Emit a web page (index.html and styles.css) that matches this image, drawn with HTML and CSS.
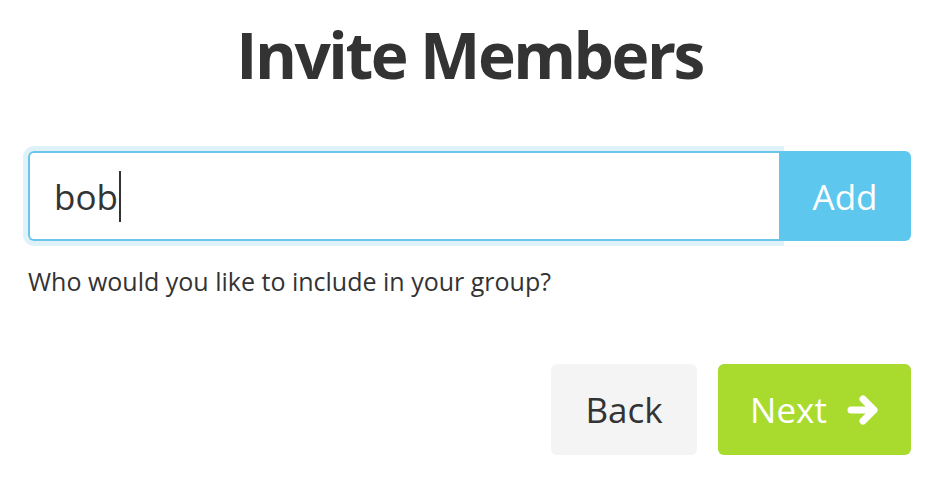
FILE: index.html
```html
<!DOCTYPE html>
<html lang="en">
<head>
<meta charset="utf-8">
<title>Invite Members</title>
<link rel="stylesheet" href="styles.css">
</head>
<body>
<main class="page">
  <h1 class="title">Invite Members</h1>
  <div class="invite-row">
    <div class="field"><span class="field-text">bob</span><span class="caret"></span></div>
    <button class="btn btn-add" type="button">Add</button>
  </div>
  <p class="hint">Who would you like to include in your group?</p>
  <div class="actions">
    <button class="btn btn-back" type="button">Back</button>
    <button class="btn btn-next" type="button">Next
      <svg class="arrow" viewBox="0 0 32 32" width="32" height="32" aria-hidden="true">
        <path d="M4 16 H27 M16 5 L27 16 L16 27" fill="none" stroke="#fff" stroke-width="7" stroke-linecap="round" stroke-linejoin="round"/>
      </svg>
    </button>
  </div>
</main>
</body>
</html>
```
FILE: styles.css
```css
* { box-sizing: border-box; }
html, body {
  margin: 0;
  padding: 0;
  background: #ffffff;
}
body {
  font-family: "Open Sans", "Liberation Sans", sans-serif;
  color: #333333;
}
.page {
  width: 883px;
  margin-left: 28px;
  padding-top: 23px;
}
.title {
  margin: 0;
  font-size: 64px;
  line-height: 64px;
  font-weight: 700;
  text-align: center;
  color: #333333;
  letter-spacing: -2.5px;
}
.invite-row {
  display: flex;
  height: 90px;
  margin-top: 64px;
}
.field {
  flex: 1;
  display: flex;
  align-items: center;
  border: 2px solid #6cc5e6;
  border-right: none;
  border-radius: 6px 0 0 6px;
  box-shadow: 0 0 0 5px rgba(108, 197, 230, 0.22);
  padding-left: 24px;
  font-size: 35px;
  color: #333333;
  position: relative;
  z-index: 0;
}
.caret {
  display: inline-block;
  width: 2px;
  height: 51px;
  background: #333333;
  margin-left: 1px;
}
.btn {
  font-family: "Open Sans", "Liberation Sans", sans-serif;
  border: none;
  cursor: pointer;
  display: flex;
  align-items: center;
  justify-content: center;
}
.btn-add {
  width: 132px;
  background: #5ec7ee;
  color: #ffffff;
  font-size: 35px;
  border-radius: 0 6px 6px 0;
  position: relative;
  z-index: 1;
}
.hint {
  margin: 22px 0 0;
  font-size: 25px;
  line-height: 36px;
  color: #333333;
}
.actions {
  display: flex;
  justify-content: flex-end;
  gap: 21px;
  margin-top: 65px;
}
.btn-back, .btn-next {
  height: 91px;
  border-radius: 6px;
  font-size: 35px;
}
.btn-back {
  width: 146px;
  background: #f4f4f4;
  color: #333333;
}
.btn-next {
  width: 193px;
  background: #a9da2e;
  color: #ffffff;
  gap: 20px;
}
.arrow {
  display: block;
}
```
